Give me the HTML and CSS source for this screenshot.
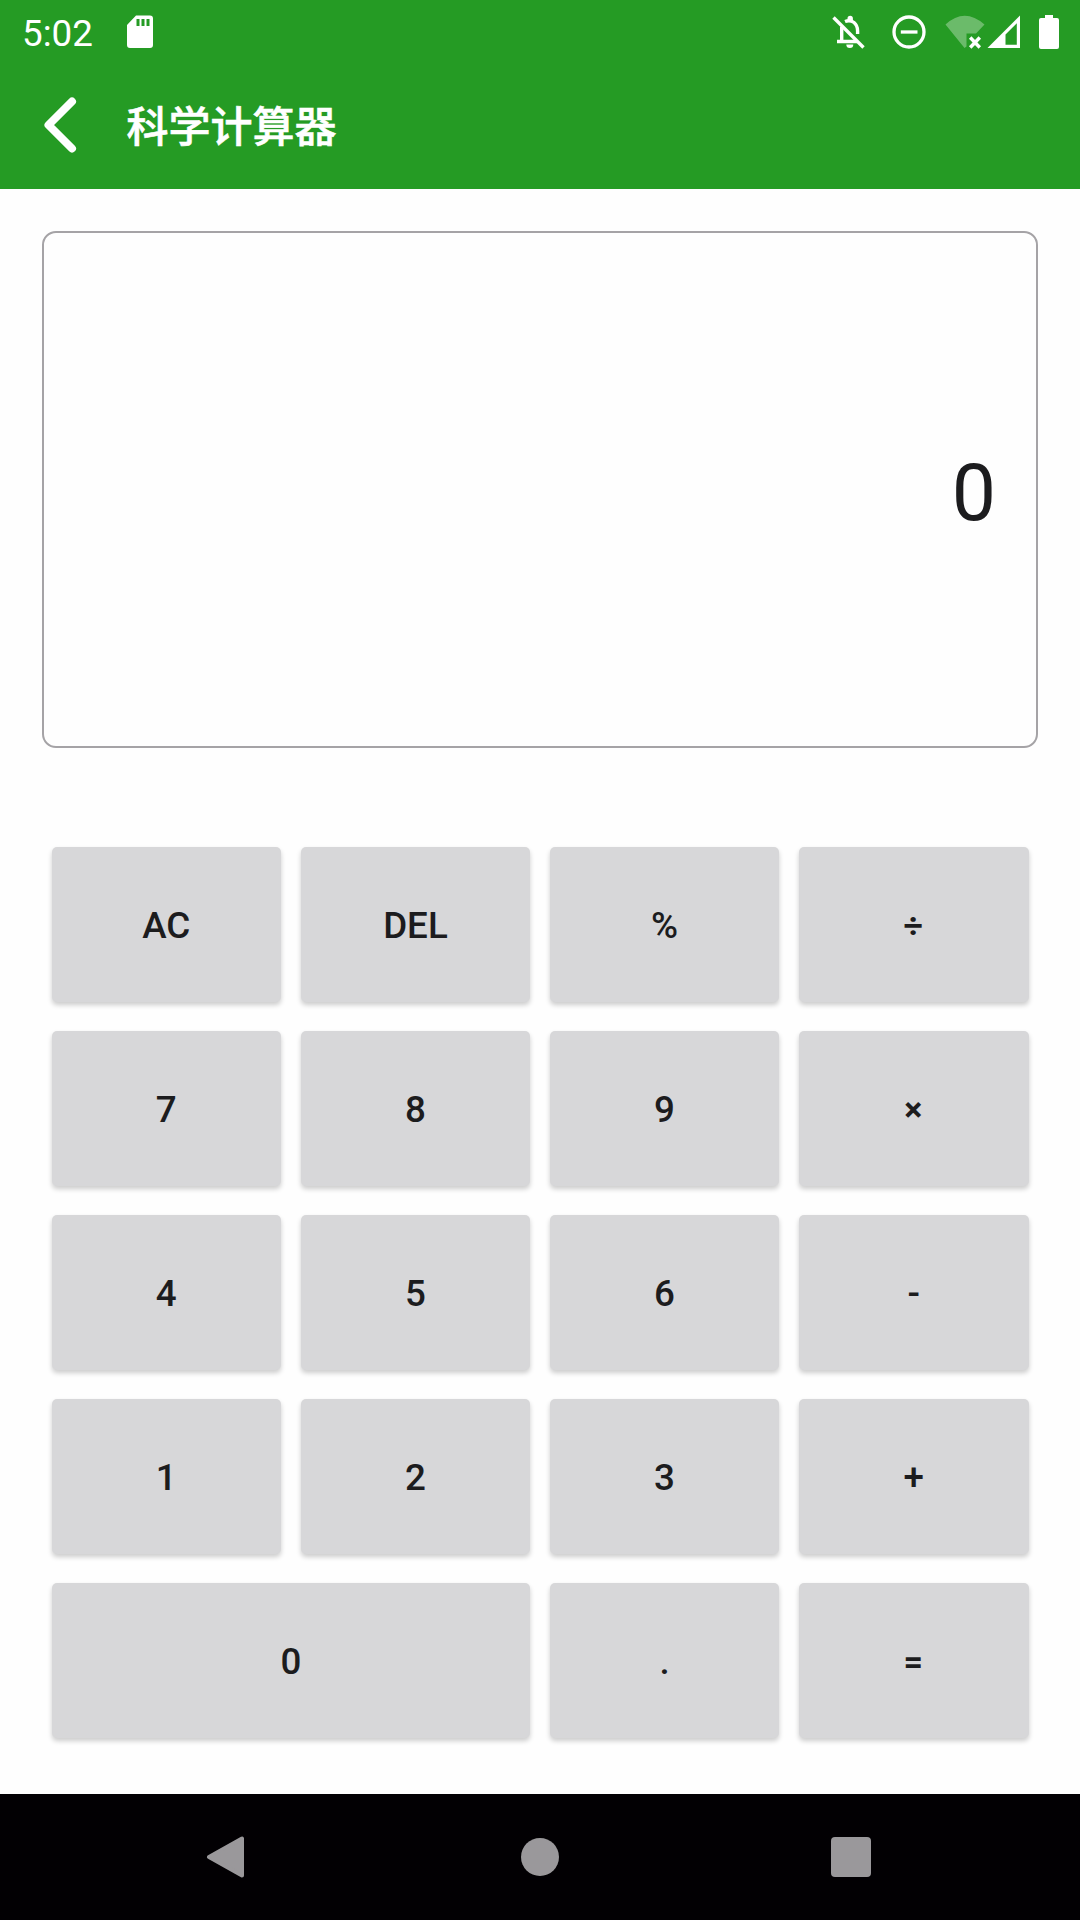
FILE: index.html
```
<!DOCTYPE html>
<html lang="zh-CN">
<head>
<meta charset="UTF-8" />
<meta name="viewport" content="width=device-width, initial-scale=1" />
<title>科学计算器</title>
<link rel="stylesheet" href="styles.css">
</head>
<body>
<div class="app">
  <header>
    <div class="status-bar">
      <span class="time">5:02</span>
      <svg class="sd-icon" width="28" height="34" viewBox="0 0 28 34">
        <path fill="#fff" fill-rule="evenodd" d="M10 0.5H24a3 3 0 0 1 3 3V30a3 3 0 0 1-3 3H4a3 3 0 0 1-3-3V10zM10.5 4v7h3V4zM15.5 4v7h3V4zM20.5 4v7h3V4z"/>
      </svg>
      <div class="status-icons">
        <!-- muted bell -->
        <svg width="34" height="34" viewBox="0 0 34 34">
          <path fill="none" stroke="#fff" stroke-width="3.4" d="M5 26.500H25M9.700 26V12M13 6.500Q18 4.500 22 7.500Q25.600 10.500 25.600 16V19"/>
          <path fill="#fff" d="M15.500 5V3.500a2.700 2.700 0 0 1 5.400 0V5zM14.300 29.500h7a3.500 3.500 0 0 1-7 0z"/>
          <path stroke="#fff" stroke-width="3.400" d="M1.500 2.500L31.500 32.500"/>
        </svg>
        <!-- do not disturb -->
        <svg class="dnd-icon" width="34" height="34" viewBox="0 0 34 34">
          <circle cx="17" cy="17" r="15" fill="none" stroke="#fff" stroke-width="3.300"/>
          <path stroke="#fff" stroke-width="3.300" d="M8.800 17H25.500"/>
        </svg>
        <!-- wifi without connection -->
        <svg class="wifi-icon" width="40" height="34" viewBox="0 0 40 34">
          <path fill="#fff" fill-opacity=".32" d="M0.500 9.500Q19.500 -8 39.500 9.500L31 18.500H21.500V31.500L19.500 33z"/>
          <path stroke="#fff" stroke-width="3.400" d="M25.200 22.500L34.800 32.500M34.800 22.500L25.200 32.500"/>
        </svg>
        <!-- mobile signal -->
        <svg class="signal-icon" width="34" height="34" viewBox="0 0 34 34">
          <path fill="#fff" fill-rule="evenodd" d="M0.500 33L33 0.500V33zM18.500 19.500V29.800H29.800V8.200z"/>
        </svg>
        <svg class="battery-icon" width="20" height="34" viewBox="0 0 20 34">
          <path fill="#fff" d="M6 0h8v3h4a2 2 0 0 1 2 2v27a2 2 0 0 1-2 2H2a2 2 0 0 1-2-2V5a2 2 0 0 1 2-2h4z"/>
        </svg>
      </div>
    </div>
    <div class="title-bar">
      <svg width="34" height="58" viewBox="0 0 34 58">
        <path fill="none" stroke="#fff" stroke-width="8" stroke-linecap="round" stroke-linejoin="round" d="M28 5.500L4.500 29L28 52.500"/>
      </svg>
      <h1>科学计算器</h1>
    </div>
  </header>

  <main>
    <div class="display" id="display">0</div>
    <div class="keys">
      <button>AC</button>
      <button>DEL</button>
      <button>%</button>
      <button class="op">÷</button>
      <button>7</button>
      <button>8</button>
      <button>9</button>
      <button class="op">×</button>
      <button>4</button>
      <button>5</button>
      <button>6</button>
      <button>-</button>
      <button>1</button>
      <button>2</button>
      <button>3</button>
      <button>+</button>
      <button class="wide">0</button>
      <button>.</button>
      <button class="op">=</button>
    </div>
  </main>

  <nav class="nav-bar">
    <svg class="nav-back" width="38" height="42" viewBox="0 0 38 42">
      <path fill="#9a989b" stroke="#9a989b" stroke-width="4" stroke-linejoin="round" d="M3 21L36 2.500V39.500z"/>
    </svg>
    <span class="nav-home"></span>
    <span class="nav-recent"></span>
  </nav>
</div>
</body>
</html>
```
FILE: styles.css
```
* {
  box-sizing: border-box;
}
body {
  margin: 0;
  font-family: Roboto, "Noto Sans CJK SC", sans-serif;
  background: #fefefe;
  color: #1c1c1e;
}
svg {
  display: block;
  flex-shrink: 0;
}
.app {
  display: flex;
  flex-direction: column;
  height: 1920px;
}

/* Header */
header {
  height: 189px;
  background: #259b24;
  color: #fff;
}
.status-bar {
  display: flex;
  align-items: center;
  height: 63px;
  padding: 0 21px 0 22px;
}
.time {
  width: 104px;
  font-size: 36.75px;
  line-height: 43px;
  padding-top: 4px;
}
.status-icons {
  display: flex;
  align-items: center;
  margin-left: auto;
}
.dnd-icon {
  margin-left: 26px;
}
.wifi-icon {
  margin-left: 19px;
}
.signal-icon {
  margin-left: 2px;
}
.battery-icon {
  margin-left: 18px;
}
.title-bar {
  display: flex;
  align-items: center;
  height: 124px;
  padding-left: 44px;
}
h1 {
  margin: 0 0 2px 48.5px;
  font-family: "Noto Sans CJK SC", sans-serif;
  font-size: 42px;
  font-weight: 500;
  line-height: 60px;
  -webkit-text-stroke: 0.6px #fff;
}

/* Calculator */
main {
  flex: 1;
  padding: 42px;
}
.display {
  display: flex;
  align-items: center;
  justify-content: flex-end;
  height: 517px;
  padding: 6px 40px 0 0;
  border: 2px solid #a5a3a6;
  border-radius: 14px;
  font-size: 78.75px;
  line-height: 92px;
}
.keys {
  display: grid;
  grid-template-columns: repeat(4, 1fr);
  grid-auto-rows: 155px;
  gap: 29px 19.5px;
  margin: 99px 9.5px 0;
}
button {
  padding: 2px 0 0;
  border: none;
  border-radius: 5px;
  background: #d7d7d9;
  color: #1c1c1e;
  font-family: inherit;
  font-size: 36.75px;
  font-weight: 500;
  box-shadow: 0 3px 5px rgba(0, 0, 0, 0.2);
}
.op {
  padding: 0 1px 0 0;
  font-size: 34px;
  font-weight: 700;
}
.wide {
  grid-column: span 2;
}

/* Navigation */
.nav-bar {
  display: flex;
  align-items: center;
  height: 126px;
  padding-left: 206px;
  background: #020003;
}
.nav-home {
  width: 38px;
  height: 38px;
  margin-left: 277px;
  border-radius: 50%;
  background: #9a989b;
}
.nav-recent {
  width: 40px;
  height: 40px;
  margin-left: 272px;
  border-radius: 4px;
  background: #9a989b;
}
```
